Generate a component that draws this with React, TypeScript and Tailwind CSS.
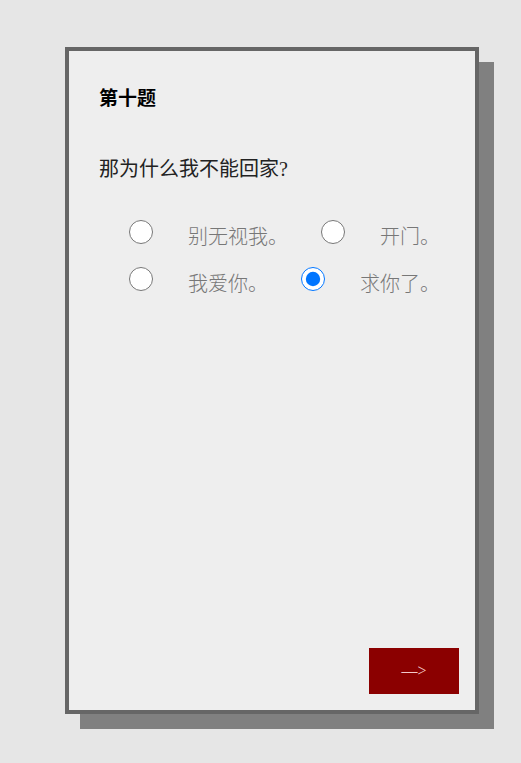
import React from 'react';

type Option = {
  label: string;
  checked?: boolean;
};

const ROWS: Option[][] = [
  [{ label: '别无视我。' }, { label: '开门。' }],
  [{ label: '我爱你。' }, { label: '求你了。', checked: true }],
];

const FONT = { fontFamily: '"Liberation Serif", "Noto Sans CJK SC", serif' };

const App: React.FC = () => {
  return (
    <div className="min-h-[763px] w-full bg-[#e6e6e6] pt-[47px] pl-[65px]" style={FONT}>
      <div className="flex h-[667px] w-[414px] flex-col border-4 border-[#666666] bg-[#eeeeee] shadow-[15px_15px_0_#808080]">
        <div className="flex-1 px-[30px] pt-[36px]">
          <h3 className="text-[19px] leading-[23px] font-bold text-black">第十题</h3>
          <p className="mt-[47px] text-[20px] leading-[24px] text-[#222222]">那为什么我不能回家?</p>
          <div className="mt-[39px] flex flex-col gap-[18px]">
            {ROWS.map((row, i) => (
              <div key={i} className="flex items-start">
                {row.map(opt => (
                  <label key={opt.label} className="ml-[30px] flex items-start [&:not(:first-child)]:ml-[33px]">
                    <input type="radio" readOnly checked={!!opt.checked} className="m-0 h-6 w-6" />
                    <span className="ml-[35px] pt-[5px] text-[20px] leading-[24px] font-light text-[#777777]">{opt.label}</span>
                  </label>
                ))}
              </div>
            ))}
          </div>
        </div>
        <div className="flex justify-end p-4">
          <button type="button" className="h-[46px] w-[90px] bg-[#8b0000] text-[16px] text-[#f3c9c9]">—&gt;</button>
        </div>
      </div>
    </div>
  );
};

export default App;
